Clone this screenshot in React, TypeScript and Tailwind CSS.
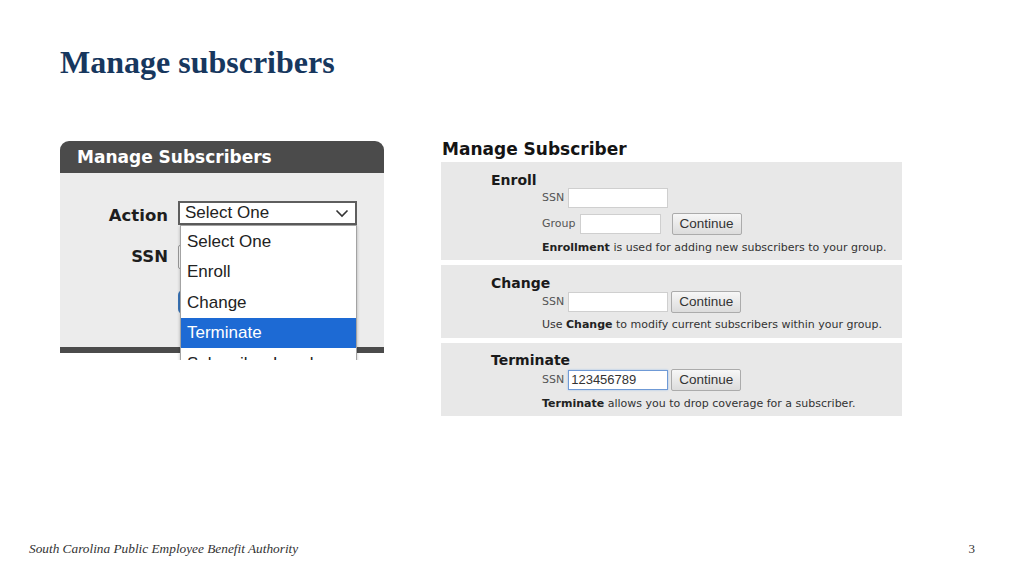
import React from "react";

const dv = "font-['DejaVu_Sans',Verdana,sans-serif]";
const ar = "font-['Liberation_Sans',Arial,sans-serif]";

function Continue() {
  return (
    <div
      className={`${ar} w-[70px] h-[22px] flex items-center justify-center text-[13.5px] text-[#333] border border-[#ababab] rounded-[2px] bg-gradient-to-b from-[#f7f7f7] to-[#dcdcdc]`}
    >
      Continue
    </div>
  );
}

function Input({ w, value, focus }: { w: string; value?: string; focus?: boolean }) {
  return (
    <div
      className={`${w} h-[20px] bg-white flex items-center pl-[2px] ${ar} text-[13px] text-[#333] ${
        focus ? "border border-[#6f9ad6] shadow-[0_0_2px_#9fc0ea]" : "border border-[#cfcfcf]"
      }`}
    >
      {value}
    </div>
  );
}

function LeftShot() {
  const items = ["Select One", "Enroll", "Change", "Terminate", "Subscriber Level"];
  return (
    <div className="mt-[2px] w-[324px] h-[219px] relative overflow-hidden shrink-0">
      <div className="h-[32px] bg-[#4b4b4b] rounded-t-[9px] pl-[17px] flex items-center">
        <span className={`${dv} font-bold text-[17px] text-white leading-[20px]`}>Manage Subscribers</span>
      </div>
      <div className="h-[174px] bg-[#ececec] flex flex-col">
        <div className="mt-[28px] flex items-start">
          <div className={`w-[108px] text-right ${dv} font-bold text-[16.5px] leading-[24px] pt-[3px] text-[#1e1e1e]`}>
            Action
          </div>
          <div
            className={`ml-[10px] w-[179px] h-[24px] bg-white border-2 border-[#5e5e5e] flex items-center justify-between pl-[5px] pr-[6px] ${ar} text-[17px] text-[#222]`}
          >
            <span>Select One</span>
            <svg width="14" height="9" viewBox="0 0 14 9">
              <polyline points="1.5,1.5 7,7 12.5,1.5" fill="none" stroke="#333" strokeWidth="1.6" />
            </svg>
          </div>
        </div>
        <div className="mt-[17px] flex items-start">
          <div className={`w-[108px] text-right ${dv} font-bold text-[16.5px] leading-[24px] text-[#1e1e1e]`}>SSN</div>
          <div className="ml-[10px] w-[150px] h-[24px] bg-white border border-[#9a9a9a] rounded-[2px]" />
        </div>
        <div className="mt-[21px] flex items-start">
          <div className="w-[108px]" />
          <div className="ml-[10px] w-[90px] h-[24px] bg-[#3a74b8] rounded-[5px]" />
        </div>
      </div>
      <div className="h-[6px] bg-[#4b4b4b]" />
      <div className="absolute left-[120px] top-[84px] w-[177px] bg-white border border-[#a3a3a3] shadow-[0_1px_3px_rgba(0,0,0,0.25)]">
        {items.map((t) => (
          <div
            key={t}
            className={`h-[30.5px] flex items-center pl-[6px] ${ar} text-[17px] ${
              t === "Terminate" ? "bg-[#1d6ad4] text-white" : "text-[#222]"
            }`}
          >
            {t}
          </div>
        ))}
      </div>
    </div>
  );
}

function RightShot() {
  const label = `${dv} text-[11px] text-[#555] leading-[14px]`;
  const desc = `${dv} text-[11px] text-[#333] leading-[14px]`;
  const head = `${dv} font-bold text-[14px] leading-[16px] text-[#1a1a1a]`;
  return (
    <div className="ml-[57px] w-[461px] flex flex-col shrink-0">
      <div className={`${dv} font-bold text-[17px] leading-[20px] text-[#141414] pl-[1px]`}>Manage Subscriber</div>
      <div className="mt-[3px] h-[98px] bg-[#e8e8e8] pt-[10px] pl-[50px] flex flex-col">
        <div className={head}>Enroll</div>
        <div className="pl-[51px] flex flex-col">
          <div className="flex items-center h-[20px]">
            <span className={label}>SSN</span>
            <div className="ml-[4px]">
              <Input w="w-[100px]" />
            </div>
          </div>
          <div className="mt-[5px] flex items-center h-[22px]">
            <span className={label}>Group</span>
            <div className="ml-[4px]">
              <Input w="w-[81px]" />
            </div>
            <div className="ml-[11px]">
              <Continue />
            </div>
          </div>
          <div className={`mt-[6px] ${desc}`}>
            <b className="text-[#222]">Enrollment</b> is used for adding new subscribers to your group.
          </div>
        </div>
      </div>
      <div className="mt-[5px] h-[73px] bg-[#e8e8e8] pt-[10px] pl-[50px] flex flex-col">
        <div className={head}>Change</div>
        <div className="pl-[51px] flex flex-col">
          <div className="flex items-center h-[22px]">
            <span className={label}>SSN</span>
            <div className="ml-[4px]">
              <Input w="w-[100px]" />
            </div>
            <div className="ml-[3px]">
              <Continue />
            </div>
          </div>
          <div className={`mt-[5px] ${desc}`}>
            Use <b className="text-[#222]">Change</b> to modify current subscribers within your group.
          </div>
        </div>
      </div>
      <div className="mt-[5px] h-[73px] bg-[#e8e8e8] pt-[9px] pl-[50px] flex flex-col">
        <div className={head}>Terminate</div>
        <div className="pl-[51px] flex flex-col">
          <div className="mt-[1px] flex items-center h-[22px]">
            <span className={label}>SSN</span>
            <div className="ml-[4px]">
              <Input w="w-[100px]" value="123456789" focus />
            </div>
            <div className="ml-[3px]">
              <Continue />
            </div>
          </div>
          <div className={`mt-[6px] ${desc}`}>
            <b className="text-[#222]">Terminate</b> allows you to drop coverage for a subscriber.
          </div>
        </div>
      </div>
    </div>
  );
}

export default function App() {
  return (
    <div className="w-[1024px] h-[576px] bg-white flex flex-col overflow-hidden">
      <div className="pt-[46px] pl-[60px]">
        <h1 className="font-['Liberation_Serif','Times_New_Roman',serif] font-bold text-[32px] leading-[32px] text-[#17375e]">
          Manage subscribers
        </h1>
      </div>
      <div className="flex items-start pl-[60px] mt-[61px]">
        <LeftShot />
        <RightShot />
      </div>
      <div className="mt-auto mb-[19px] h-[16px] flex items-center justify-between pl-[29px] pr-[49px] font-['Liberation_Serif','Times_New_Roman',serif] text-[#333]">
        <span className="italic text-[13.3px] leading-[16px]">South Carolina Public Employee Benefit Authority</span>
        <span className="text-[13px] leading-[16px]">3</span>
      </div>
    </div>
  );
}
